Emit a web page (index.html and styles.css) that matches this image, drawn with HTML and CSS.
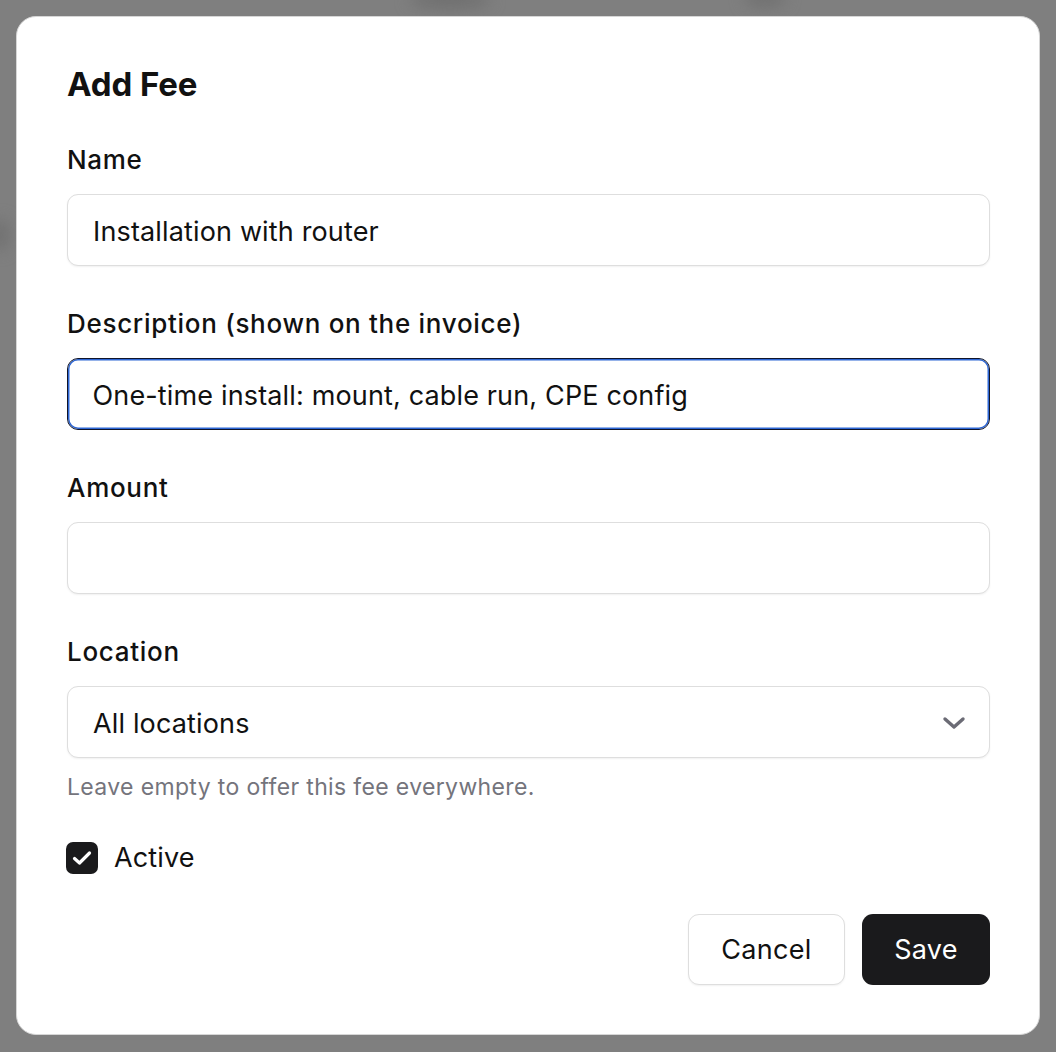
FILE: index.html
```html
<!DOCTYPE html>
<html lang="en">
<head>
  <meta charset="UTF-8" />
  <meta name="viewport" content="width=device-width, initial-scale=1.0">
  <title>Add Fee</title>
  <link rel="stylesheet" href="styles.css">
</head>
<body>
  <div class="backdrop">
    <div class="blur blur-a"></div>
    <div class="blur blur-b"></div>
    <div class="blur blur-c"></div>

    <form class="modal">
      <h2 class="title">Add Fee</h2>

      <div class="field">
        <label for="name">Name</label>
        <input id="name" class="input" type="text" value="Installation with router" />
      </div>

      <div class="field">
        <label for="desc">Description (shown on the invoice)</label>
        <input id="desc" class="input focused" type="text" value="One-time install: mount, cable run, CPE config" />
      </div>

      <div class="field">
        <label for="amount">Amount</label>
        <input id="amount" class="input" type="text" value="" />
      </div>

      <div class="field">
        <label for="location">Location</label>
        <div class="select">
          <span>All locations</span>
          <svg class="chevron" width="24" height="14" viewBox="0 0 24 14">
            <path d="M3 3 L12 11 L21 3" fill="none" stroke="#6b6b75" stroke-width="3.4" stroke-linecap="round" stroke-linejoin="round"/>
          </svg>
        </div>
        <p class="hint">Leave empty to offer this fee everywhere.</p>
      </div>

      <label class="check">
        <span class="box">
          <svg width="22" height="18" viewBox="0 0 22 18">
            <path d="M3.5 9.5 L8.5 14 L18.5 4" fill="none" stroke="#fff" stroke-width="3.2" stroke-linecap="round" stroke-linejoin="round"/>
          </svg>
        </span>
        Active
      </label>

      <div class="actions">
        <button type="button" class="btn btn-cancel">Cancel</button>
        <button type="button" class="btn btn-save">Save</button>
      </div>
    </form>
  </div>
</body>
</html>
```

FILE: styles.css
```css
body {
  margin: 0;
  font-family: Inter, "Noto Sans", sans-serif;
  color: #111;
  background: #7f7f7f;
}
.backdrop {
  position: relative;
  height: 1052px;
  padding: 16px;
  box-sizing: border-box;
  overflow: hidden;
}
.blur {
  position: absolute;
  background: #6e6e6e;
  filter: blur(8px);
  border-radius: 50%;
}
.blur-a { left: 410px; top: -10px; width: 80px; height: 18px; }
.blur-b { left: 745px; top: -10px; width: 40px; height: 16px; }
.blur-c { left: -10px; top: 220px; width: 18px; height: 30px; }

.modal {
  position: relative;
  width: 1024px;
  height: 1019px;
  box-sizing: border-box;
  background: #fff;
  border: 1px solid #d6d6d6;
  border-radius: 20px;
  padding: 47px 49px 49px 50px;
  display: flex;
  flex-direction: column;
}
.title {
  margin: 0 0 39px;
  font-size: 33px;
  line-height: 40px;
  font-weight: 700;
  letter-spacing: -0.1px;
}
.field {
  display: flex;
  flex-direction: column;
  margin-bottom: 41px;
}
.field label {
  font-size: 26px;
  line-height: 34px;
  font-weight: 500;
  letter-spacing: 0.7px;
  margin-bottom: 17px;
}
.input,
.select {
  height: 72px;
  box-sizing: border-box;
  border: 1px solid #dedede;
  border-radius: 11px;
  padding: 2px 25px 0;
  font-family: inherit;
  font-size: 27px;
  letter-spacing: 0.15px;
  color: #111;
  background: #fff;
  box-shadow: 0 1px 2px rgba(0, 0, 0, 0.06);
  outline: none;
}
.input.focused {
  border: 1.5px solid #10152a;
  box-shadow: inset 0 0 0 1.5px #2d66d4;
  padding-left: 24.5px;
}
.select {
  display: flex;
  align-items: center;
  justify-content: space-between;
}
.chevron {
  margin-right: -2px;
}
.hint {
  margin: 14px 0 0;
  font-size: 23px;
  line-height: 30px;
  color: #74747c;
  letter-spacing: 0.35px;
}
.check {
  display: flex;
  align-items: center;
  gap: 16px;
  font-size: 27px;
  letter-spacing: 0.15px;
  line-height: 32px;
  margin-top: -1px;
}
.box {
  width: 32px;
  height: 32px;
  margin-left: -1px;
  border-radius: 7px;
  background: #1a1a1c;
  display: flex;
  align-items: center;
  justify-content: center;
}
.actions {
  display: flex;
  justify-content: flex-end;
  gap: 17px;
  margin-top: auto;
}
.btn {
  height: 71px;
  border-radius: 11px;
  font-family: inherit;
  font-size: 27px;
  letter-spacing: 0.3px;
  padding: 0;
  cursor: pointer;
}
.btn-cancel {
  background: #fff;
  color: #111;
  border: 1px solid #dedede;
  box-shadow: 0 1px 2px rgba(0, 0, 0, 0.06);
  width: 157px;
}
.btn-save {
  background: #1a1a1c;
  color: #fff;
  border: none;
  width: 128px;
}
```
